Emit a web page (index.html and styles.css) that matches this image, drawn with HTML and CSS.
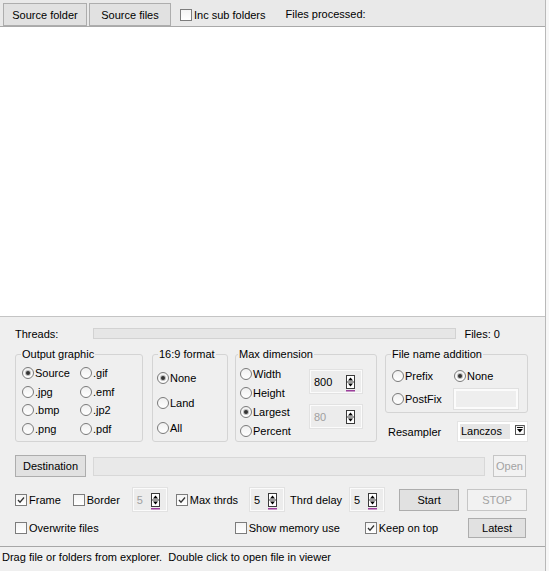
FILE: index.html
```html
<!DOCTYPE html>
<html lang="en">
<head>
    <meta charset="UTF-8">
    <meta name="viewport" content="width=device-width, initial-scale=1.0">
    <title>Image Resizer</title>
    <link rel="stylesheet" href="styles.css">
</head>
<body>
<div class="window">
    <div class="toolbar">
        <button class="btn btn-src">Source folder</button>
        <button class="btn btn-src">Source files</button>
        <label class="opt inc"><span class="cb"></span>Inc sub folders</label>
        <span class="processed">Files processed:</span>
    </div>

    <div class="filelist"></div>

    <div class="panel">
        <div class="row threads">
            <span>Threads:</span>
            <div class="progress"></div>
            <span class="files-count">Files: 0</span>
        </div>

        <div class="groups">
            <fieldset class="group g-output">
                <legend>Output graphic</legend>
                <div class="output-grid">
                    <label class="opt"><span class="rb on"></span>Source</label>
                    <label class="opt"><span class="rb"></span>.gif</label>
                    <label class="opt"><span class="rb"></span>.jpg</label>
                    <label class="opt"><span class="rb"></span>.emf</label>
                    <label class="opt"><span class="rb"></span>.bmp</label>
                    <label class="opt"><span class="rb"></span>.jp2</label>
                    <label class="opt"><span class="rb"></span>.png</label>
                    <label class="opt"><span class="rb"></span>.pdf</label>
                </div>
            </fieldset>

            <fieldset class="group g-format">
                <legend>16:9 format</legend>
                <label class="opt"><span class="rb on"></span>None</label>
                <label class="opt"><span class="rb"></span>Land</label>
                <label class="opt"><span class="rb"></span>All</label>
            </fieldset>

            <fieldset class="group g-dim">
                <legend>Max dimension</legend>
                <div class="dim-body">
                    <div class="dim-radios">
                        <label class="opt"><span class="rb"></span>Width</label>
                        <label class="opt"><span class="rb"></span>Height</label>
                        <label class="opt"><span class="rb on"></span>Largest</label>
                        <label class="opt"><span class="rb"></span>Percent</label>
                    </div>
                    <div class="dim-spins">
                        <div class="spin spin-lg">
                            <span class="spin-val">800</span>
                            <svg class="spin-btn" width="9" height="17" viewBox="0 0 9 17"><rect x="0.5" y="0.5" width="8" height="13" fill="#fff" stroke="#3a3a3a"/><line x1="1" y1="7" x2="8" y2="7" stroke="#3a3a3a"/><path d="M2 5.5h5L4.5 2.5z" fill="#000"/><path d="M2 8.5h5L4.5 11.5z" fill="#000"/><rect x="0" y="15" width="9" height="1.5" fill="#9b3f9b"/></svg>
                        </div>
                        <div class="spin spin-lg disabled">
                            <span class="spin-val">80</span>
                            <svg class="spin-btn" width="9" height="17" viewBox="0 0 9 17"><rect x="0.5" y="0.5" width="8" height="13" fill="#fff" stroke="#3a3a3a"/><line x1="1" y1="7" x2="8" y2="7" stroke="#3a3a3a"/><path d="M2 5.5h5L4.5 2.5z" fill="#000"/><path d="M2 8.5h5L4.5 11.5z" fill="#000"/></svg>
                        </div>
                    </div>
                </div>
            </fieldset>

            <div class="right-col">
                <fieldset class="group g-name">
                    <legend>File name addition</legend>
                    <div class="name-grid">
                        <label class="opt"><span class="rb"></span>Prefix</label>
                        <label class="opt"><span class="rb on"></span>None</label>
                        <label class="opt"><span class="rb"></span>PostFix</label>
                        <div class="textbox"></div>
                    </div>
                </fieldset>
                <div class="resampler">
                    <span>Resampler</span>
                    <div class="select">
                        <span class="select-val">Lanczos</span>
                        <svg class="select-btn" width="10" height="10" viewBox="0 0 10 10"><rect x="0.5" y="0.5" width="9" height="9" fill="#fff" stroke="#4a4a4a"/><line x1="2" y1="2.5" x2="8" y2="2.5" stroke="#000"/><path d="M2 4h6L5 7.5z" fill="#000"/></svg>
                    </div>
                </div>
            </div>
        </div>

        <div class="row dest">
            <button class="btn btn-dest">Destination</button>
            <div class="field"></div>
            <button class="btn btn-open" disabled>Open</button>
        </div>

        <div class="row opts">
            <label class="opt"><span class="cb on"><svg width="10" height="10" viewBox="0 0 10 10"><path d="M2 5l2 2.2L8 2.5" fill="none" stroke="#333" stroke-width="1.3"/></svg></span>Frame</label>
            <label class="opt o-border"><span class="cb"></span>Border</label>
            <div class="spin spin-sm disabled o-bspin">
                <span class="spin-val">5</span>
                <svg class="spin-btn" width="9" height="17" viewBox="0 0 9 17"><rect x="0.5" y="0.5" width="8" height="13" fill="#fff" stroke="#3a3a3a"/><line x1="1" y1="7" x2="8" y2="7" stroke="#3a3a3a"/><path d="M2 5.5h5L4.5 2.5z" fill="#000"/><path d="M2 8.5h5L4.5 11.5z" fill="#000"/><rect x="0" y="15" width="9" height="1.5" fill="#9b3f9b"/></svg>
            </div>
            <label class="opt o-max"><span class="cb on"><svg width="10" height="10" viewBox="0 0 10 10"><path d="M2 5l2 2.2L8 2.5" fill="none" stroke="#333" stroke-width="1.3"/></svg></span>Max thrds</label>
            <div class="spin spin-sm o-mspin">
                <span class="spin-val">5</span>
                <svg class="spin-btn" width="9" height="17" viewBox="0 0 9 17"><rect x="0.5" y="0.5" width="8" height="13" fill="#fff" stroke="#3a3a3a"/><line x1="1" y1="7" x2="8" y2="7" stroke="#3a3a3a"/><path d="M2 5.5h5L4.5 2.5z" fill="#000"/><path d="M2 8.5h5L4.5 11.5z" fill="#000"/><rect x="0" y="15" width="9" height="1.5" fill="#9b3f9b"/></svg>
            </div>
            <span class="o-delay">Thrd delay</span>
            <div class="spin spin-sm o-dspin">
                <span class="spin-val">5</span>
                <svg class="spin-btn" width="9" height="17" viewBox="0 0 9 17"><rect x="0.5" y="0.5" width="8" height="13" fill="#fff" stroke="#3a3a3a"/><line x1="1" y1="7" x2="8" y2="7" stroke="#3a3a3a"/><path d="M2 5.5h5L4.5 2.5z" fill="#000"/><path d="M2 8.5h5L4.5 11.5z" fill="#000"/><rect x="0" y="15" width="9" height="1.5" fill="#9b3f9b"/></svg>
            </div>
            <button class="btn btn-start">Start</button>
            <button class="btn btn-stop" disabled>STOP</button>
        </div>

        <div class="row opts2">
            <label class="opt"><span class="cb"></span>Overwrite files</label>
            <label class="opt o-mem"><span class="cb"></span>Show memory use</label>
            <label class="opt o-top"><span class="cb on"><svg width="10" height="10" viewBox="0 0 10 10"><path d="M2 5l2 2.2L8 2.5" fill="none" stroke="#333" stroke-width="1.3"/></svg></span>Keep on top</label>
            <button class="btn btn-latest">Latest</button>
        </div>
    </div>

    <div class="status">Drag file or folders from explorer.&nbsp; Double click to open file in viewer</div>
</div>
</body>
</html>
```

FILE: styles.css
```css
body {
    margin: 0;
    background: #f7f7f7;
    font: 11px "Liberation Sans", Arial, sans-serif;
    color: #000;
}
.window {
    width: 545px;
    height: 571px;
    background: #efefef;
    border-right: 1px solid #b9b9b9;
    display: flex;
    flex-direction: column;
}

/* buttons */
.btn {
    font: inherit;
    color: #000;
    height: 23px;
    padding: 0;
    background: #e1e1e1;
    border: 1px solid #adadad;
    border-radius: 0;
    box-sizing: border-box;
}
.btn:disabled {
    background: #f2f2f2;
    border-color: #c6c6c6;
    color: #a3a3a3;
}

/* checkbox + radio */
.opt {
    display: flex;
    align-items: center;
    white-space: nowrap;
}
.cb {
    width: 12px;
    height: 12px;
    box-sizing: border-box;
    border: 1px solid #7c7c7c;
    background: linear-gradient(#f4f4f4, #ffffff);
    margin-right: 2px;
    display: flex;
    align-items: center;
    justify-content: center;
}
.rb {
    width: 12px;
    height: 12px;
    box-sizing: border-box;
    border: 1px solid #7a7a7a;
    border-radius: 50%;
    background: linear-gradient(#f0f0f0, #ffffff);
    margin-right: 1px;
    display: flex;
    align-items: center;
    justify-content: center;
}
.rb.on::after {
    content: "";
    width: 4px;
    height: 4px;
    border-radius: 50%;
    background: #333;
    box-shadow: 0 0 0 1px #bdbdbd;
}

/* top toolbar */
.toolbar {
    height: 27px;
    background: #e9e9e9;
    border-bottom: 1px solid #a9a9a9;
    display: flex;
    align-items: flex-start;
    padding: 3px 0 0 3px;
    box-sizing: border-box;
    flex: none;
}
.btn-src {
    width: 84px;
    margin-right: 2px;
}
.btn-src + .btn-src {
    width: 82px;
}
.inc {
    height: 23px;
    margin-left: 7px;
}
.processed {
    line-height: 23px;
    margin-left: 20px;
}

.filelist {
    height: 289px;
    background: #fff;
    border-bottom: 1px solid #c4c4c4;
    flex: none;
}

/* bottom panel */
.panel {
    height: 229px;
    padding-left: 15px;
    border-bottom: 1px solid #a7a7a7;
    flex: none;
}
.row {
    display: flex;
    align-items: center;
}
.threads {
    margin-top: 10px;
    height: 13px;
}
.progress {
    width: 363px;
    height: 11px;
    margin-left: 35px;
    background: #e6e6e6;
    border: 1px solid #d2d2d2;
    box-sizing: border-box;
}
.files-count {
    margin-left: 8px;
}

/* group boxes */
.groups {
    display: flex;
    margin-top: 8px;
    height: 94px;
}
.group {
    margin: 0;
    padding: 0;
    min-width: 0;
    border: 1px solid #d4d4d4;
    border-radius: 3px;
    box-sizing: border-box;
}
.group legend {
    padding: 0 1px;
    margin-left: 5px;
    line-height: 13px;
}
.g-output {
    width: 128px;
    height: 94px;
}
.output-grid {
    display: grid;
    grid-template-columns: 58px 1fr;
    grid-auto-rows: 18.5px;
    padding: 3px 0 0 6px;
}
.g-format {
    width: 76px;
    height: 94px;
    margin-left: 9px;
    padding: 4px 0 0 4px;
}
.g-format legend {
    margin-left: 1px;
}
.g-format .opt {
    height: 25px;
}
.g-dim {
    width: 142px;
    height: 94px;
    margin-left: 7px;
}
.g-dim legend {
    margin-left: 2px;
}
.dim-body {
    display: flex;
    padding: 3px 0 0 4px;
}
.dim-radios .opt {
    height: 19px;
}
.dim-spins {
    margin-left: auto;
    margin-right: 14px;
    padding-top: 6px;
    display: flex;
    flex-direction: column;
    gap: 12px;
}

/* spin edits */
.spin {
    display: flex;
    align-items: center;
    box-sizing: border-box;
    background: #ececec;
    border: 1px solid #fbfbfb;
    outline: 1px solid #e2e2e2;
    padding-left: 3px;
}
.spin-lg {
    width: 52px;
    height: 23px;
}
.spin-sm {
    width: 34px;
    height: 23px;
}
.spin-val {
    flex: 1;
}
.spin.disabled .spin-val {
    color: #a0a0a0;
}
.spin-btn {
    margin: 3px 6px 0 0;
}

.right-col {
    width: 143px;
    margin-left: 8px;
    display: flex;
    flex-direction: column;
}
.g-name {
    height: 66px;
}
.name-grid {
    display: grid;
    grid-template-columns: 62px 64px;
    grid-template-rows: 18px 20px;
    row-gap: 4px;
    align-items: center;
    padding: 6px 0 0 6px;
}
.textbox {
    height: 20px;
    background: #eeeeee;
    border: 2px solid #fbfbfb;
    box-sizing: border-box;
    outline: 1px solid #e0e0e0;
}
.resampler {
    display: flex;
    align-items: center;
    margin-top: 8px;
    height: 21px;
    padding-left: 3px;
}
.select {
    margin-left: auto;
    width: 71px;
    height: 21px;
    box-sizing: border-box;
    background: #fff;
    border: 1px solid #e4e4e4;
    padding: 2px;
    display: flex;
    align-items: center;
}
.select-val {
    background: #e6e6e6;
    width: 50px;
    height: 15px;
    line-height: 15px;
    padding-left: 1px;
}
.select-btn {
    margin-left: 5px;
    margin-top: -3px;
}

/* destination row */
.dest {
    margin-top: 13px;
    height: 22px;
}
.btn-dest {
    width: 71px;
    height: 22px;
}
.field {
    width: 392px;
    height: 19px;
    margin-left: 7px;
    background: #e9e9e9;
    border: 1px solid #d8d8d8;
    box-sizing: border-box;
}
.btn-open {
    width: 33px;
    height: 22px;
    margin-left: 8px;
}

/* option rows */
.opts {
    margin-top: 11px;
    height: 23px;
}
.o-border { margin-left: 12px; }
.o-bspin { margin-left: 13px; }
.o-max { margin-left: 9px; }
.o-mspin { margin-left: 12px; }
.o-delay { margin-left: 6px; }
.o-dspin { margin-left: 8px; }
.btn-start {
    width: 60px;
    height: 22px;
    margin-left: 15px;
}
.btn-stop {
    width: 60px;
    height: 22px;
    margin-left: 8px;
}
.opts2 {
    margin-top: 7px;
    height: 20px;
}
.o-mem { margin-left: 136px; }
.o-top { margin-left: 25px; }
.btn-latest {
    width: 58px;
    height: 20px;
    margin-left: auto;
    margin-right: 19px;
}

.status {
    height: 23px;
    line-height: 21px;
    padding-left: 2px;
    background: #f0f0f0;
    flex: none;
}
```
